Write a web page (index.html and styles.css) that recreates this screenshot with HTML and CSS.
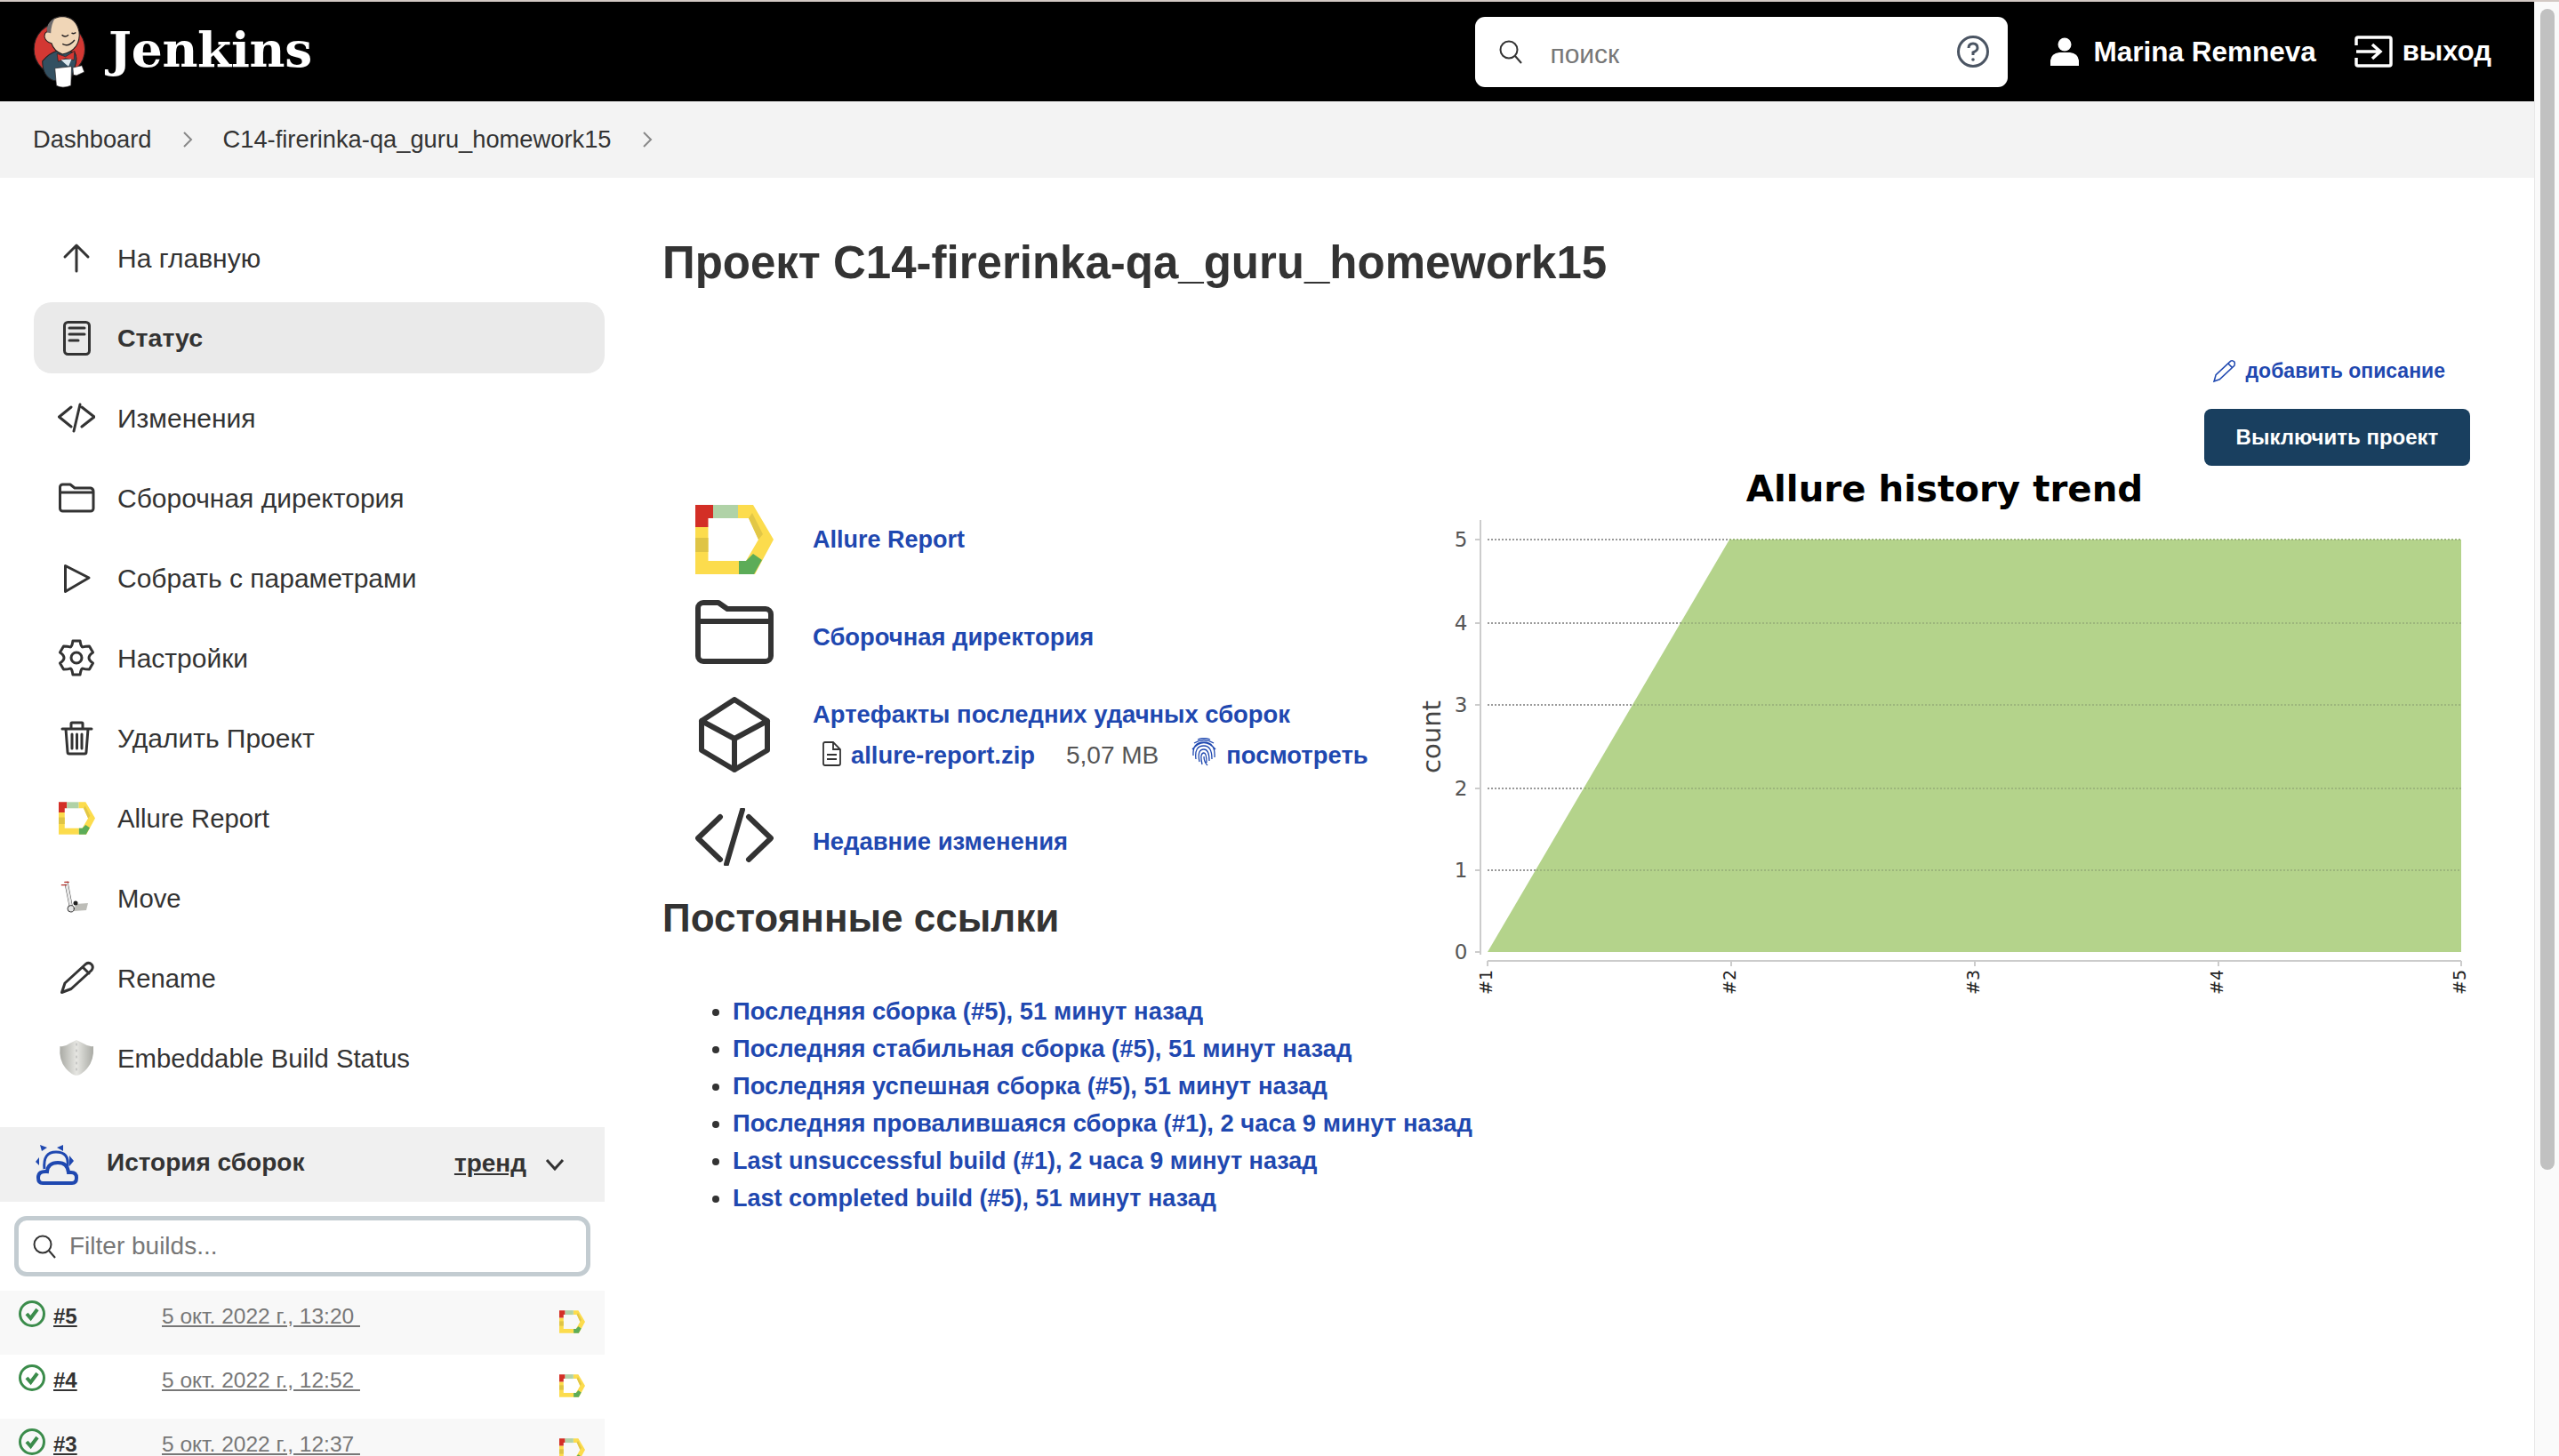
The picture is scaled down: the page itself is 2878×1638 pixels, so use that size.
FILE: index.html
```html
<!DOCTYPE html>
<html lang="ru">
<head>
<meta charset="utf-8">
<title>C14-firerinka-qa_guru_homework15 [Jenkins]</title>
<link rel="stylesheet" href="styles.css">
</head>
<body>
<svg class="defs" width="0" height="0" aria-hidden="true">
  <defs>
    <symbol id="allure" viewBox="0 0 88 78">
      <path fill="#fcdc4d" d="M48 0H65L88 39 67 78H49V63H57L71 39 60 15H48Z"/>
      <path fill="#e2c747" d="M60 15 64 9 76 33 71 39Z"/>
      <path fill="#fcdc4d" d="M0 25H14.5V63H49V78H0Z"/>
      <path fill="#dfc445" d="M0 37H14.5V53H0Z"/>
      <path fill="#d32f26" d="M0 0H20V15H14.5V25H0Z"/>
      <path fill="#b0d2a7" d="M20 0H48V15H20Z"/>
      <path fill="#5cac58" d="M49 78H66L75 62 65 55 57 63H49Z"/>
    </symbol>
    <linearGradient id="shieldfill" x1="0" y1="0" x2="1" y2="0">
      <stop offset="0" stop-color="#a9aaa4"/>
      <stop offset=".5" stop-color="#e6e6e2"/>
      <stop offset="1" stop-color="#a9aaa4"/>
    </linearGradient>
  </defs>
</svg>
<div class="window">
  <div class="viewport">
    <header class="topbar">
      <div class="brand">
        <svg class="logo" viewBox="53 53 175 240">
          <ellipse cx="140" cy="165" rx="84" ry="86" fill="#d33833" stroke="#231f20" stroke-width="3"/>
          <path d="M84 205Q105 178 135 170L190 175Q202 195 190 225L176 272 120 268Q85 255 84 205Z" fill="#335061" stroke="#231f20" stroke-width="3"/>
          <path d="M100 108Q102 60 150 57 196 60 205 108 208 135 195 155 180 176 150 182 122 172 114 146 96 142 91 126 90 110 100 108Z" fill="#f0d6b7" stroke="#231f20" stroke-width="3"/>
          <path d="M100 110Q93 80 126 62 112 85 112 112Z" fill="#6d6b6d"/>
          <path d="M148 118Q158 128 170 118M180 112Q188 116 194 110M150 148Q170 160 190 135" fill="none" stroke="#231f20" stroke-width="4"/>
          <path d="M132 180 160 190 190 171 188 201 160 196 136 206Z" fill="#d33833" stroke="#231f20" stroke-width="2"/>
          <path d="M145 200 180 198 170 222 160 214Z" fill="#dce8ee"/>
          <path d="M125 228 180 222 178 285Q150 296 130 285Z" fill="#fff" stroke="#231f20" stroke-width="2"/>
          <path d="M184 226 214 219 222 240 196 252 186 250Z" fill="#fff" stroke="#231f20" stroke-width="2"/>
        </svg>
        <span class="wordmark">Jenkins</span>
      </div>
      <div class="search">
        <svg class="search-ico" viewBox="0 0 27 27"><circle cx="11" cy="11" r="9.5"/><path d="M18 18 25 26"/></svg>
        <span class="search-ph">поиск</span>
        <svg class="help-ico" viewBox="0 0 36 36"><circle cx="18" cy="18" r="16.5"/><path d="M13 14Q13 9 18 9 23 9 23 14 23 17 18 19V22"/><circle class="dot" cx="18" cy="27" r="1.8"/></svg>
      </div>
      <a class="user">
        <svg class="user-ico" viewBox="0 0 32 32"><circle cx="16" cy="8" r="7.5"/><path d="M0 32V26Q1 18 10 17H22Q31 18 32 26V32Z"/></svg>
        <span>Marina Remneva</span>
      </a>
      <a class="logout">
        <svg class="logout-ico" viewBox="0 0 43 36"><path d="M2 11V4Q2 2 4 2H39Q41 2 41 4V32Q41 34 39 34H4Q2 34 2 32V25"/><path d="M2 18H28M20 10 29 18 20 26"/></svg>
        <span>выход</span>
      </a>
    </header>

    <nav class="crumbs">
      <a>Dashboard</a>
      <svg class="crumb-sep" viewBox="0 0 12 20"><path d="M2 2 10 10 2 18"/></svg>
      <a>C14-firerinka-qa_guru_homework15</a>
      <svg class="crumb-sep" viewBox="0 0 12 20"><path d="M2 2 10 10 2 18"/></svg>
    </nav>

    <div class="layout">
      <aside class="sidebar">
        <ul class="tasks">
          <li class="task"><svg class="ti" viewBox="0 0 42 42"><path d="M21 36V7M8 20 21 7 34 20"/></svg><span>На главную</span></li>
          <li class="task task-on"><svg class="ti" viewBox="0 0 42 42"><rect x="7.5" y="3.5" width="28" height="36" rx="4"/><path d="M13 10H30M13 17H30M13 24H23"/></svg><span>Статус</span></li>
          <li class="task"><svg class="ti" viewBox="0 0 42 42"><path d="M15 9 1.5 20 15 31M27 9 41 20 27 31M25 6 18 36"/></svg><span>Изменения</span></li>
          <li class="task"><svg class="ti" viewBox="0 0 42 42"><path d="M2.5 13V9A3 3 0 0 1 5.500 6H14L19 10H37A4 4 0 0 1 40 14V33A3 3 0 0 1 37 36H5.500A3 3 0 0 1 2.500 33ZM2.500 15H40"/></svg><span>Сборочная директория</span></li>
          <li class="task"><svg class="ti" viewBox="0 0 42 42"><path d="M8.500 7.500V36.500L35 21Z"/></svg><span>Собрать с параметрами</span></li>
          <li class="task"><svg class="ti" viewBox="0 0 42 42"><path d="M16.950 1.930H25.050Q26 9 28 8.880 31 8 35.490 7.950L39.550 14.970Q35 18 35 21 35 24 39.550 27.030L35.490 34.050Q31 34 28 33.120 26 33 25.050 40.070H16.950Q16 33 14 33.120 11 34 6.510 34.050L2.450 27.030Q7 24 7 21 7 18 2.450 14.970L6.510 7.950Q11 8 14 8.880 16 9 16.950 1.930Z"/><circle cx="21" cy="21" r="6"/></svg><span>Настройки</span></li>
          <li class="task"><svg class="ti" viewBox="0 0 42 42"><path d="M5 11H38M15 10V5Q15 4 16 4H27Q28 4 28 5V10M9 11 11 37Q11 39 13 39H30Q32 39 32 37L34 11M16 17V33M21.500 17V33M27 17V33"/></svg><span>Удалить Проект</span></li>
          <li class="task task-lat"><svg class="ti ti-fill" viewBox="0 0 42 42"><use href="#allure" x="1" y="3" width="41" height="37"/></svg><span>Allure Report</span></li>
          <li class="task task-lat"><svg class="ti ti-fill" viewBox="0 0 42 42"><path d="M20 28 34 27 32 35 18 36Z" fill="#bdbdb8"/><path d="M11 3 16.700 33M8.300 6 13.300 31" stroke="#444" stroke-width="1" fill="none"/><path d="M8.300 6 11 3 16.700 33 13.300 31Z" fill="#e6e6e6"/><path d="M4.300 6.700H9.700M7.700 3.300H12.300" stroke="#b5322b" stroke-width="1.200"/><circle cx="20" cy="27" r="2.500" fill="#222"/><circle cx="14.700" cy="33.300" r="3.700" fill="#e4e4e4" stroke="#333" stroke-width="1"/></svg><span>Move</span></li>
          <li class="task task-lat"><svg class="ti" viewBox="0 0 42 42"><path d="M4.500 37.500 8 27 31.500 5.500Q35 3 38 6 40.500 9 38 12.500L15 33.500ZM28 9 35 16"/></svg><span>Rename</span></li>
          <li class="task task-lat"><svg class="ti ti-fill" viewBox="0 0 42 42"><path d="M21 1 29 5Q35 9 40 8 41 24 33 33 27 40 21 41 15 40 9 33 1 24 2.500 8 8 9 13 5Z" fill="url(#shieldfill)"/><path d="M21 5V36" stroke="#aaa" stroke-width="1" stroke-dasharray="2 5"/></svg><span>Embeddable Build Status</span></li>
        </ul>

        <section class="history">
          <div class="hist-head">
            <svg class="hist-ico" viewBox="0 0 48 45"><path d="M8 43H41Q46 43 46 37 46 31 40 31H37Q36 20 25 20 14 20 13 30 3 29 3 37 3 43 8 43Z"/><path d="M10 27Q8 8 23 8 38 8 36 24"/><path class="ray" d="M5 0 13 3 7 7ZM24 3 31 0 31 7ZM0 19 4 14 4 23ZM38 12 43 18 38 24Z"/></svg>
            <span class="hist-title">История сборок</span>
            <a class="hist-trend">тренд</a>
            <svg class="hist-chev" viewBox="0 0 22 14"><path d="M2 2 11 12 20 2"/></svg>
          </div>
          <div class="filter">
            <svg class="search-ico" viewBox="0 0 27 27"><circle cx="11" cy="11" r="9.500"/><path d="M18 18 25 26"/></svg>
            <span class="filter-ph">Filter builds...</span>
          </div>
          <div class="build build-alt">
            <svg class="ok" viewBox="0 0 30 30"><circle cx="15" cy="15" r="13.500"/><path d="M9 15 13.500 20 21 10"/></svg>
            <a class="build-no">#5</a><a class="build-date">5 окт. 2022 г., 13:20&nbsp;</a>
            <svg class="build-al" viewBox="0 0 29 26"><use href="#allure" width="29" height="26"/></svg>
          </div>
          <div class="build">
            <svg class="ok" viewBox="0 0 30 30"><circle cx="15" cy="15" r="13.500"/><path d="M9 15 13.500 20 21 10"/></svg>
            <a class="build-no">#4</a><a class="build-date">5 окт. 2022 г., 12:52&nbsp;</a>
            <svg class="build-al" viewBox="0 0 29 26"><use href="#allure" width="29" height="26"/></svg>
          </div>
          <div class="build build-alt">
            <svg class="ok" viewBox="0 0 30 30"><circle cx="15" cy="15" r="13.500"/><path d="M9 15 13.500 20 21 10"/></svg>
            <a class="build-no">#3</a><a class="build-date">5 окт. 2022 г., 12:37&nbsp;</a>
            <svg class="build-al" viewBox="0 0 29 26"><use href="#allure" width="29" height="26"/></svg>
          </div>
        </section>
      </aside>

      <main class="main">
        <h1 class="title">Проект C14-firerinka-qa_guru_homework15</h1>
        <div class="desc">
          <a class="desc-link">
            <svg class="desc-ico" viewBox="0 0 26 26"><path d="M2 24 4 17 20 2Q22 1 24 3 25 5 24 7L8 22ZM17.500 5 21.500 9"/></svg>
            <span>добавить описание</span>
          </a>
        </div>
        <div class="actions"><button class="disable">Выключить проект</button></div>

        <svg class="chart" viewBox="1590 525 1188 600">
          <text class="c-title" x="2187" y="563">Allure history trend</text>
          <path class="c-axis" d="M1665 584V1073M1673 1080H2768M1673 1080V1086M1947 1080V1086M2221 1080V1086M2495 1080V1086M2768 1080V1086M1659 606H1665M1659 700H1665M1659 792H1665M1659 886H1665M1659 978H1665M1659 1070H1665"/>
          <path class="c-grid" d="M1673 606H1950M1673 700H1890M1673 792H1840M1673 886H1790M1673 978H1730"/>
          <polygon class="c-area" points="1673,1070 1945,606 2768,606 2768,1070"/>
          <path class="c-grid c-grid-over" d="M1945 606H2768M1890 700H2768M1837 792H2768M1782 886H2768M1728 978H2768"/>
          <g class="c-y">
            <text x="1643" y="614">5</text><text x="1643" y="708">4</text><text x="1643" y="800">3</text>
            <text x="1643" y="894">2</text><text x="1643" y="986">1</text><text x="1643" y="1078">0</text>
          </g>
          <text class="c-count" transform="translate(1620 828) rotate(-90)">count</text>
          <g class="c-x">
            <text transform="translate(1678 1090) rotate(-90)">#1</text>
            <text transform="translate(1952 1090) rotate(-90)">#2</text>
            <text transform="translate(2226 1090) rotate(-90)">#3</text>
            <text transform="translate(2500 1090) rotate(-90)">#4</text>
            <text transform="translate(2773 1090) rotate(-90)">#5</text>
          </g>
        </svg>

        <div class="lead">
          <div class="lead-row lead-1">
            <svg class="lead-ico lead-al" viewBox="0 0 88 78"><use href="#allure" width="88" height="78"/></svg>
            <a class="lnk lnk-lat">Allure Report</a>
          </div>
          <div class="lead-row lead-2">
            <svg class="lead-ico" viewBox="0 0 88 72"><path d="M3 16V9A6 6 0 0 1 9 3H26L36 10H79A6 6 0 0 1 85 16V63A6 6 0 0 1 79 69H9A6 6 0 0 1 3 63ZM3 24H85"/></svg>
            <a class="lnk lnk-low">Сборочная директория</a>
          </div>
          <div class="lead-row lead-3">
            <svg class="lead-ico" viewBox="0 0 88 85"><path d="M44 3 81 27V60L44 82 7 60V27ZM7 27 44 47 81 27M44 47V82"/></svg>
            <div class="arts">
              <a class="lnk">Артефакты последних удачных сборок</a>
              <div class="art-file">
                <svg class="file-ico" viewBox="0 0 22 28"><path d="M2 3Q2 1 4 1H13L21 9V25Q21 27 19 27H4Q2 27 2 25ZM13 1V9H21M6 15H17M6 20H17"/></svg>
                <a class="lnk art-name">allure-report.zip</a>
                <span class="art-size">5,07 MB</span>
                <svg class="fp-ico" viewBox="0 0 28 32"><path d="M7 2Q14 -1 21 2M3 6Q14 -1 25 6M1 13Q14 -2 27 13M2 20Q1 5 14 5 27 5 26 22M5 24Q3 9 14 9 23 9 23 24M9 27Q6 13 14 13 20 13 20 26M12 30Q9 17 14 17 17 17 17 28M14 21Q14 27 18 31"/></svg>
                <a class="lnk art-view">посмотреть</a>
              </div>
            </div>
          </div>
          <div class="lead-row lead-4">
            <svg class="lead-ico" viewBox="0 0 88 65"><path d="M28 10 3 34 28 58M60 10 85 34 60 58M53 2 35 63"/></svg>
            <a class="lnk lnk-low">Недавние изменения</a>
          </div>
        </div>

        <h2 class="perma-title">Постоянные ссылки</h2>
        <ul class="perma">
          <li><a class="lnk">Последняя сборка (#5), 51 минут назад</a></li>
          <li><a class="lnk">Последняя стабильная сборка (#5), 51 минут назад</a></li>
          <li><a class="lnk">Последняя успешная сборка (#5), 51 минут назад</a></li>
          <li><a class="lnk">Последняя провалившаяся сборка (#1), 2 часа 9 минут назад</a></li>
          <li><a class="lnk lnk-lat">Last unsuccessful build (#1), 2 часа 9 минут назад</a></li>
          <li><a class="lnk lnk-lat">Last completed build (#5), 51 минут назад</a></li>
        </ul>
      </main>
    </div>
  </div>
  <div class="scrollbar"><div class="thumb"></div></div>
</div>
</body>
</html>
```
FILE: styles.css
```css
* { box-sizing: border-box; }
html, body { margin: 0; height: 100%; overflow: hidden; }
body {
  background: #fff;
  color: #333;
  font-family: "Liberation Sans", Arial, sans-serif;
  font-size: 30px;
  border-top: 2px solid #d3c9c4;
}
a { color: inherit; }
ul { list-style: none; margin: 0; padding: 0; }
.defs { position: absolute; }

.window { display: flex; height: 1636px; overflow: hidden; }
.viewport { width: 2850px; flex: none; overflow: hidden; }
.scrollbar {
  width: 28px;
  flex: none;
  background: #fafafa;
  border-left: 1px solid #e8e8e8;
  padding: 8px 5px 0 6px;
}
.thumb { height: 1306px; background: #c1c1c1; border-radius: 8px; }

/* top bar */
.topbar {
  height: 112px;
  background: #000;
  color: #fff;
  display: flex;
  align-items: center;
  padding-right: 48px;
}
.brand { display: flex; align-items: center; margin-left: 37px; margin-right: auto; }
.logo { width: 60px; height: 82px; }
.wordmark {
  margin: -6px 0 0 25px;
  font: bold 55px "DejaVu Serif", serif;
  letter-spacing: -.3px;
  color: #fff;
}
.search {
  width: 599px;
  height: 79px;
  background: #fff;
  border-radius: 11px;
  display: flex;
  align-items: center;
  padding: 0 21px 0 27px;
}
.search-ico { width: 27px; height: 27px; flex: none; fill: none; stroke: #333; stroke-width: 2; }
.search-ph { margin-left: 30px; margin-top: 5px; color: #777; font-size: 30px; flex: 1; }
.help-ico { width: 36px; height: 36px; fill: none; stroke: #4b5563; stroke-width: 3; }
.help-ico .dot { fill: #4b5563; stroke: none; }
.user { display: flex; align-items: center; margin-left: 48px; font-size: 31.500px; font-weight: bold; }
.user-ico { width: 32px; height: 32px; margin-right: 16px; fill: #fff; }
.logout { display: flex; align-items: center; margin-left: 43px; font-size: 31px; font-weight: bold; }
.logout-ico { width: 43px; height: 36px; margin-right: 11px; fill: none; stroke: #fff; stroke-width: 3.500; }

/* breadcrumb */
.crumbs {
  height: 86px;
  background: #f3f3f3;
  display: flex;
  align-items: center;
  padding-left: 37px;
  font-size: 27.300px;
}
.crumb-sep { width: 12px; height: 20px; margin: 0 34px 0 34px; fill: none; stroke: #888; stroke-width: 2; }

/* layout */
.layout { display: flex; align-items: flex-start; }
.sidebar { width: 680px; flex: none; padding-top: 50px; }
.tasks { display: flex; flex-direction: column; gap: 10px; padding-left: 38px; }
.task {
  height: 80px;
  display: flex;
  align-items: center;
  gap: 25px;
  padding-left: 27px;
  border-radius: 20px;
}
.task span { padding-top: 1px; }
.task-on { background: #eaeaea; font-weight: bold; font-size: 28.500px; }
.task-lat { font-size: 29.300px; }
.ti { width: 42px; height: 42px; flex: none; fill: none; stroke: #333; stroke-width: 3; stroke-linecap: round; stroke-linejoin: round; }
.ti-fill { stroke: none; }

/* history */
.history { margin-top: 38px; }
.hist-head {
  height: 84px;
  background: #f0f0f0;
  display: flex;
  align-items: center;
  padding-left: 40px;
  font-size: 28px;
}
.hist-ico { width: 48px; height: 45px; fill: none; stroke: #1f48b0; stroke-width: 4; }
.hist-ico path:nth-child(2) { stroke-width: 3; }
.hist-ico .ray { fill: #1f48b0; stroke: none; }
.hist-title { margin: -5px 0 0 32px; font-weight: bold; flex: 1; }
.hist-trend { margin-top: -3px; font-weight: bold; text-decoration: underline; }
.hist-chev { width: 22px; height: 14px; margin: 0 45px 0 21px; fill: none; stroke: #333; stroke-width: 3; }
.filter {
  margin: 16px 16px 16px 16px;
  height: 68px;
  border: 5px solid #c3ccd1;
  border-radius: 14px;
  display: flex;
  align-items: center;
  padding-left: 16px;
  font-size: 28px;
}
.filter-ph { margin-left: 14px; color: #777; }
.build {
  height: 72px;
  display: flex;
  align-items: flex-start;
  padding: 11px 22px 0 21px;
  font-size: 24.500px;
}
.build-alt { background: #f8f8f8; }
.ok { width: 30px; height: 30px; flex: none; fill: none; stroke: #3b8c4b; stroke-width: 3; }
.ok path { stroke-width: 4; }
.build-no { margin-left: 9px; margin-top: 4px; width: 122px; font-weight: bold; font-size: 24px; text-decoration: underline; }
.build-date { margin-top: 4px; color: #777; text-decoration: underline; }
.build-al { width: 29px; height: 26px; margin: 11px 0 0 auto; }

/* main */
.main { flex: 1; min-width: 0; padding: 62px 72px 0 65px; }
.title { margin: 0; font-size: 51px; font-weight: bold; line-height: 68px; }
.desc { margin-top: 74px; text-align: right; padding-right: 28px; height: 38px; }
.desc-link { display: inline-flex; align-items: center; gap: 11px; color: #1f48b0; font-size: 23px; font-weight: bold; }
.desc-ico { width: 27px; height: 27px; fill: none; stroke: #1f48b0; stroke-width: 1.500; }
.actions { margin-top: 18px; text-align: right; }
.disable {
  width: 299px;
  height: 64px;
  background: #193f5f;
  color: #fff;
  border: 0;
  border-radius: 8px;
  font: bold 24px "Liberation Sans", Arial, sans-serif;
}

.chart { float: right; width: 1188px; height: 600px; margin-top: 2px; }
.c-title { font: bold 40.300px "DejaVu Sans", sans-serif; fill: #000; text-anchor: middle; }
.c-axis { fill: none; stroke: #ccc; stroke-width: 2; }
.c-grid { fill: none; stroke: #999; stroke-width: 2; stroke-dasharray: 2 2; }
.c-grid-over { stroke: #9cb67c; }
.c-area { fill: #b4d38b; }
.c-y text { font: 23px "DejaVu Sans", sans-serif; fill: #555; text-anchor: middle; }
.c-count { font: 29px "DejaVu Sans", sans-serif; fill: #444; text-anchor: middle; }
.c-x text { font: 19px "DejaVu Sans", sans-serif; fill: #222; text-anchor: end; }

.lead { padding-left: 37px; padding-top: 39px; }
.lead-row { display: flex; align-items: center; gap: 44px; }
.lead-ico { width: 88px; flex: none; fill: none; stroke: #333; stroke-width: 6; stroke-linecap: round; stroke-linejoin: round; }
.lead-al { stroke: none; }
.lead-1 { height: 88px; }
.lead-1 .lead-ico { height: 78px; }
.lead-2 { height: 80px; margin-top: 20px; }
.lead-2 .lead-ico { height: 72px; }
.lead-3 { height: 90px; margin-top: 30px; }
.lead-3 .lead-ico { height: 85px; }
.lead-4 { height: 70px; margin-top: 35px; }
.lead-4 .lead-ico { height: 65px; }
.lnk { color: #1f48b0; font-weight: bold; font-size: 27.400px; }
.lnk.lnk-lat { font-size: 27px; }
.lnk-low { margin-top: 12px; }
.arts { display: flex; flex-direction: column; gap: 14px; padding-top: 2px; }
.art-file { display: flex; align-items: center; padding-left: 10px; }
.file-ico { width: 22px; height: 28px; fill: none; stroke: #333; stroke-width: 1.800; stroke-linecap: butt; margin-top: -4px; }
.art-name { margin-left: 11px; }
.art-size { margin-left: 35px; font-size: 28px; color: #555; }
.fp-ico { width: 28px; height: 32px; margin: -8px 0 0 37px; fill: none; stroke: #1f48b0; stroke-width: 1.300; }
.art-view { margin-left: 11px; }

.perma-title { margin: 29px 0 0; font-size: 44px; line-height: 56px; font-weight: bold; }
.perma { margin-top: 56px; padding-left: 79px; list-style: disc; }
.perma li { height: 42px; line-height: 42px; font-size: 27.400px; }
```
